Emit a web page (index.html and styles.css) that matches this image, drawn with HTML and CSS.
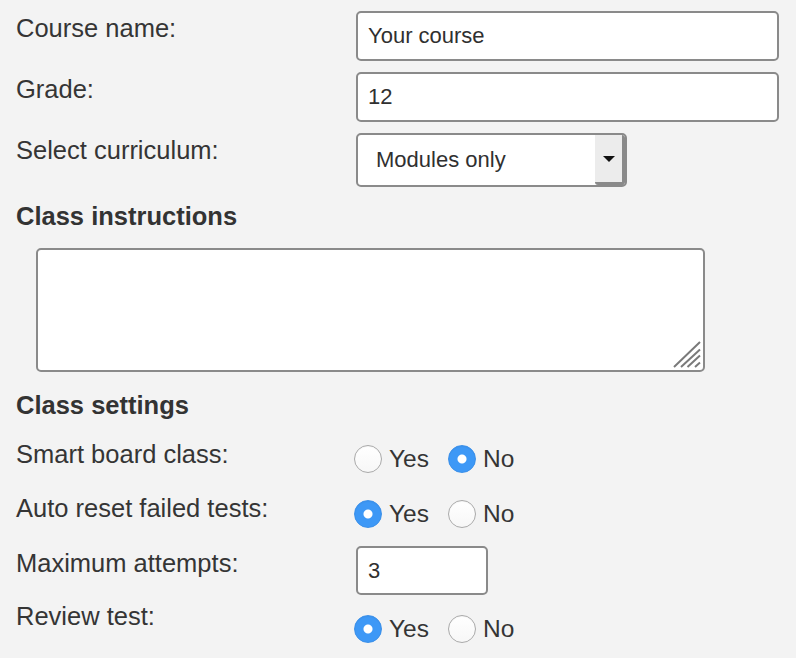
FILE: index.html
```html
<!DOCTYPE html>
<html lang="en">
<head>
<meta charset="utf-8">
<title>Course settings</title>
<link rel="stylesheet" href="styles.css">
</head>
<body>
<form class="form">
  <div class="row row-gap">
    <label class="label" for="course">Course name:</label>
    <input class="text-input wide" id="course" type="text" value="Your course">
  </div>
  <div class="row row-gap">
    <label class="label" for="grade">Grade:</label>
    <input class="text-input wide" id="grade" type="text" value="12">
  </div>
  <div class="row">
    <label class="label">Select curriculum:</label>
    <div class="select">
      <span class="select-value">Modules only</span>
      <span class="select-btn"><span class="caret"></span></span>
    </div>
  </div>

  <h2 class="heading heading-instr">Class instructions</h2>
  <div class="textarea-wrap">
    <textarea class="textarea"></textarea>
    <svg class="grip" width="30" height="28" viewBox="0 0 30 28" aria-hidden="true">
      <path d="M2 26 L28 1 M9 26 L28 8.5 M15.5 26 L28 14.5 M23 26 L28 21.5" stroke="#7a7a7a" stroke-width="2" fill="none"/>
    </svg>
  </div>

  <h2 class="heading heading-settings">Class settings</h2>
  <div class="set-row set-a">
    <span class="label">Smart board class:</span>
    <div class="options opt-a">
      <label class="opt"><input class="radio" type="radio" name="smart"><span>Yes</span></label>
      <label class="opt"><input class="radio" type="radio" name="smart" checked><span>No</span></label>
    </div>
  </div>
  <div class="set-row set-b">
    <span class="label">Auto reset failed tests:</span>
    <div class="options opt-b">
      <label class="opt"><input class="radio" type="radio" name="reset" checked><span>Yes</span></label>
      <label class="opt"><input class="radio" type="radio" name="reset"><span>No</span></label>
    </div>
  </div>
  <div class="set-row set-c">
    <label class="label label-pad" for="attempts">Maximum attempts:</label>
    <input class="text-input small" id="attempts" type="text" value="3">
  </div>
  <div class="set-row set-d">
    <span class="label">Review test:</span>
    <div class="options opt-d">
      <label class="opt"><input class="radio" type="radio" name="review" checked><span>Yes</span></label>
      <label class="opt"><input class="radio" type="radio" name="review"><span>No</span></label>
    </div>
  </div>
</form>
</body>
</html>
```

FILE: styles.css
```css
* { box-sizing: border-box; }

html, body {
  margin: 0;
  padding: 0;
  background: #f3f3f3;
}

body {
  font-family: "Liberation Sans", Arial, Helvetica, sans-serif;
  color: #353535;
  width: 796px;
  height: 658px;
  overflow: hidden;
}

.form {
  padding: 11px 0 0 16px;
}

.row {
  display: flex;
  align-items: flex-start;
}

.row-gap {
  margin-bottom: 11px;
}

.label {
  width: 340px;
  flex: none;
  font-size: 25.5px;
  line-height: 28px;
  padding-top: 3px;
}

.set-row .label {
  padding-top: 0;
}

.set-row .label-pad {
  padding-top: 3px;
}

.text-input {
  font-family: "Liberation Sans", Arial, Helvetica, sans-serif;
  font-size: 22px;
  color: #303030;
  background: #fff;
  border: 2px solid #8a8a8a;
  border-radius: 5px;
  padding: 0 10px;
  margin: 0;
  outline: none;
}

.wide {
  width: 423px;
  height: 50px;
}

.small {
  width: 132px;
  height: 49px;
}

.select {
  display: flex;
  width: 271px;
  height: 54px;
  background: #fff;
  border: 2px solid #8a8a8a;
  border-radius: 5px;
  overflow: hidden;
}

.select-value {
  flex: 1;
  display: flex;
  align-items: center;
  padding-left: 18px;
  font-size: 22px;
  color: #303030;
}

.select-btn {
  width: 30px;
  flex: none;
  display: flex;
  align-items: center;
  justify-content: center;
  background: #ececec;
  border-right: 3px solid #8a8a8a;
  border-bottom: 3px solid #8a8a8a;
  border-bottom-left-radius: 3px;
}

.caret {
  width: 0;
  height: 0;
  border-left: 6px solid transparent;
  border-right: 6px solid transparent;
  border-top: 6px solid #111;
  margin-top: 1px;
}

.heading {
  margin: 0;
  font-size: 25.5px;
  line-height: 28px;
  font-weight: bold;
  color: #333;
}

.heading-instr {
  margin-top: 15px;
}

.textarea-wrap {
  position: relative;
  width: 669px;
  height: 124px;
  margin: 18px 0 0 20px;
}

.textarea {
  display: block;
  width: 100%;
  height: 100%;
  margin: 0;
  background: #fff;
  border: 2px solid #8a8a8a;
  border-radius: 5px;
  resize: none;
  outline: none;
}

.grip {
  position: absolute;
  right: 3px;
  bottom: 3px;
}

.heading-settings {
  margin-top: 19px;
}

.set-row {
  display: flex;
  align-items: flex-start;
}

.set-a { margin-top: 21px; height: 54px; }
.set-b { height: 52px; }
.set-c { height: 56px; }
.set-d { height: 56px; }

.options {
  display: flex;
  align-items: center;
  margin-left: -2px;
}

.opt-a { margin-top: 5px; }
.opt-b { margin-top: 6px; }
.opt-d { margin-top: 13px; }

.opt {
  display: inline-flex;
  align-items: center;
  gap: 7px;
  font-size: 24.5px;
  line-height: 28px;
  margin-right: 19px;
  color: #353535;
}

.radio {
  appearance: none;
  -webkit-appearance: none;
  width: 28px;
  height: 28px;
  margin: 0;
  border-radius: 50%;
  border: 1px solid #aaaaaa;
  background: linear-gradient(#ffffff, #f7f7f7);
  box-shadow: inset 0 1px 1px rgba(0,0,0,0.04);
}

.radio:checked {
  border: 1px solid #3a8fe9;
  background: radial-gradient(circle, #ffffff 0, #ffffff 4px, #3d98f6 5px, #3d98f6 100%);
}
```
